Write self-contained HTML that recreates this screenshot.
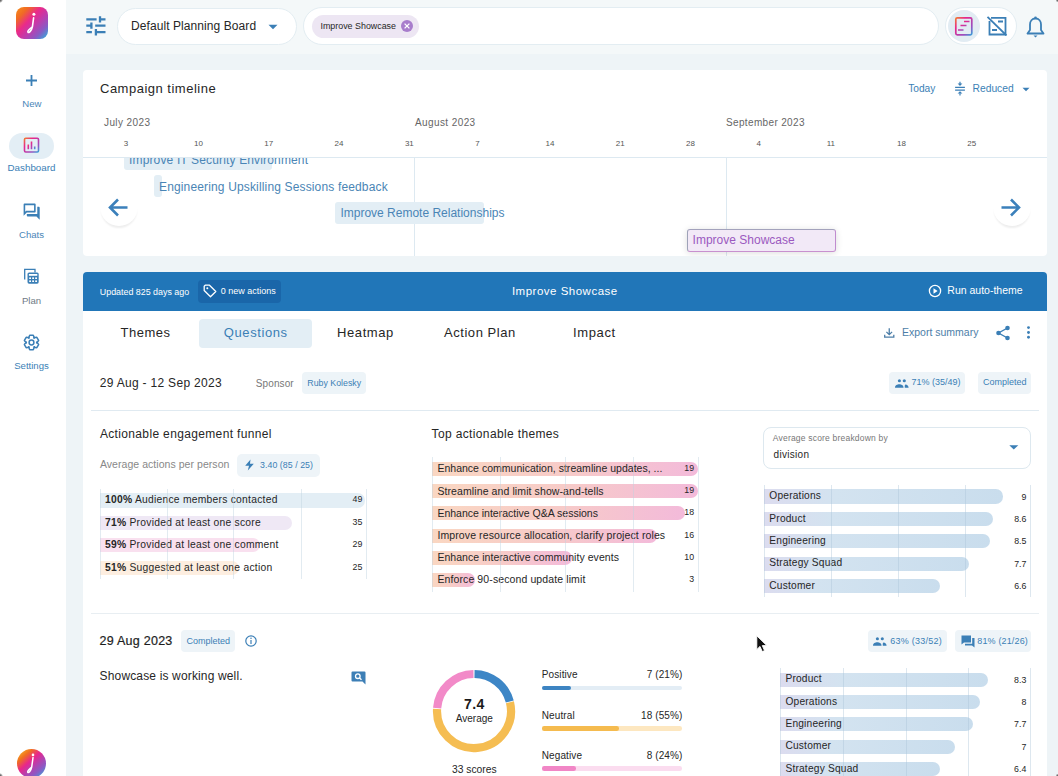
<!DOCTYPE html>
<html><head><meta charset="utf-8">
<style>
*{box-sizing:border-box;margin:0;padding:0}
html,body{width:1058px;height:776px;overflow:hidden;background:#eef4f7;font-family:"Liberation Sans",sans-serif;color:#262626;position:relative}
.abs{position:absolute}
.t{position:absolute;white-space:nowrap;line-height:1}
.pill{position:absolute;background:#fff;border:1px solid #e3edf2}
</style></head><body>
<div class="abs" style="left:0px;top:0px;width:66px;height:776px;background:#fff;border-radius:0;"></div>
<svg class="abs" style="left:16px;top:7px" width="32" height="32" viewBox="0 0 32 32">
<defs><linearGradient id="lg" x1="0.05" y1="0.1" x2="0.95" y2="0.95"><stop offset="0" stop-color="#f5821c"/><stop offset="0.15" stop-color="#f06a25"/><stop offset="0.38" stop-color="#ea2a8a"/><stop offset="0.58" stop-color="#c33aaa"/><stop offset="0.8" stop-color="#8c58c4"/><stop offset="1" stop-color="#3aa3d8"/></linearGradient></defs>
<rect width="32" height="32" rx="8" fill="url(#lg)"/>
<path d="M17.6 10.8L16.4 19.8C14 21.5 11.3 24.3 12 25.3C12.8 26.4 15.6 23.6 16.4 19.8" fill="none" stroke="#fff" stroke-width="1.6" stroke-linecap="round" stroke-linejoin="round"/>
<circle cx="17.9" cy="7.2" r="1.5" fill="#fff"/>
</svg>
<svg class="abs" style="left:25px;top:74px" width="13" height="13" viewBox="0 0 13 13"><path d="M6.5 1V12M1 6.5H12" stroke="#3b7fb6" stroke-width="1.8"/></svg>
<div class="t" style="left:31.90px;transform:translateX(-50%);top:98.57px;font-size:9.6px;color:#4a86b8;">New</div>
<div class="abs" style="left:9px;top:133px;width:45px;height:26px;background:#e3eef5;border-radius:13px;"></div>
<svg class="abs" style="left:23px;top:137px" width="17" height="16" viewBox="0 0 17 16">
<defs><linearGradient id="dg" x1="0" y1="0" x2="1" y2="1"><stop offset="0" stop-color="#f07a30"/><stop offset="0.3" stop-color="#e8258c"/><stop offset="0.75" stop-color="#9a4fc0"/><stop offset="1" stop-color="#3aa0d8"/></linearGradient></defs>
<rect x="1.5" y="1.2" width="14" height="13.8" rx="1.2" fill="none" stroke="url(#dg)" stroke-width="1.6"/>
<path d="M5.3 7.5V12.3M8.5 4.5V12.3M11.7 9.5V12.3" stroke="url(#dg)" stroke-width="1.6"/>
</svg>
<div class="t" style="left:31.50px;transform:translateX(-50%);top:163.30px;font-size:9.8px;color:#3b7fb6;">Dashboard</div>
<svg class="abs" style="left:21.8px;top:201.8px" width="19.3" height="19.3" viewBox="0 0 24 24"><path fill="#3b7fb6" d="M15 4v7H5.17L4 12.17V4h11m1-2H3c-.55 0-1 .45-1 1v14l4-4h10c.55 0 1-.45 1-1V3c0-.55-.45-1-1-1zm5 4h-2v9H6v2c0 .55.45 1 1 1h11l4 4V7c0-.55-.45-1-1-1z"/></svg>
<div class="t" style="left:31.50px;transform:translateX(-50%);top:229.87px;font-size:9.6px;color:#4a86b8;">Chats</div>
<svg class="abs" style="left:23px;top:268px" width="17" height="17" viewBox="0 0 17 17">
<path d="M1.7 11.4V1.3H12V4.4" fill="none" stroke="#3b7fb6" stroke-width="1.3"/>
<rect x="4.5" y="4.4" width="11.2" height="11.3" rx="1.6" fill="#3b7fb6"/>
<rect x="5.9" y="6" width="8.4" height="1.8" fill="#fff"/>
<g fill="#fff"><rect x="6.2" y="9.4" width="1.8" height="1.6"/><rect x="9.2" y="9.4" width="1.8" height="1.6"/><rect x="12.2" y="9.4" width="1.8" height="1.6"/>
<rect x="6.2" y="12.4" width="1.8" height="1.6"/><rect x="9.2" y="12.4" width="1.8" height="1.6"/><rect x="12.2" y="12.4" width="1.8" height="1.6"/></g>
</svg>
<div class="t" style="left:31.50px;transform:translateX(-50%);top:295.87px;font-size:9.6px;color:#6f7a86;">Plan</div>
<svg class="abs" style="left:23px;top:333.5px" width="17" height="17" viewBox="0 0 17 17"><path d="M11.48 4.24 L10.29 1.32 L6.71 1.32 L5.52 4.24 L6.30 3.79 L3.18 3.36 L1.39 6.46 L3.32 8.95 L3.32 8.05 L1.39 10.54 L3.18 13.64 L6.30 13.21 L5.52 12.76 L6.71 15.68 L10.29 15.68 L11.48 12.76 L10.70 13.21 L13.82 13.64 L15.61 10.54 L13.68 8.05 L13.68 8.95 L15.61 6.46 L13.82 3.36 L10.70 3.79Z" fill="none" stroke="#3b7fb6" stroke-width="1.5" stroke-linejoin="round"/><circle cx="8.5" cy="8.5" r="2.4" fill="none" stroke="#3b7fb6" stroke-width="1.5"/></svg>
<div class="t" style="left:31.50px;transform:translateX(-50%);top:360.87px;font-size:9.6px;color:#3b7fb6;">Settings</div>
<svg class="abs" style="left:17px;top:749px" width="29" height="29" viewBox="0 0 29 29">
<defs><linearGradient id="lg2" x1="0.1" y1="0.05" x2="0.9" y2="0.95"><stop offset="0" stop-color="#f7b02a"/><stop offset="0.2" stop-color="#f0701e"/><stop offset="0.42" stop-color="#e8268c"/><stop offset="0.62" stop-color="#b342b0"/><stop offset="0.8" stop-color="#8a5bc5"/><stop offset="1" stop-color="#3aa3d8"/></linearGradient></defs>
<circle cx="14.5" cy="14.5" r="14.5" fill="url(#lg2)"/>
<path d="M16 8.6L14.7 18.2C12.5 19.8 10.1 22.4 10.8 23.3C11.6 24.3 14 21.8 14.7 18.2" fill="none" stroke="#fff" stroke-width="1.5" stroke-linecap="round" stroke-linejoin="round"/>
<circle cx="16" cy="5.9" r="1.3" fill="#fff"/>
</svg>
<div class="abs" style="left:66px;top:0px;width:992px;height:54px;background:#f4f8f9;border-radius:0;"></div>
<svg class="abs" style="left:85px;top:14px" width="22" height="23" viewBox="0 0 22 23">
<g stroke="#3b7fb6" stroke-width="2.3">
<path d="M1.3 5.4H11.6M15 5.4H20.5M15 2.2V8.5"/>
<path d="M1.3 11.7H6.9M10.2 11.7H20.5M6.4 8.6V14.8"/>
<path d="M1.3 18.2H6.9M10.9 18.2H20.5M10.9 15.1V21.6"/>
</g></svg>
<div class="pill" style="left:117px;top:8px;width:180px;height:37px;border-radius:19px"></div>
<div class="t" style="left:131.00px;top:19.84px;font-size:12px;color:#262626;letter-spacing:0.08px;">Default Planning Board</div>
<svg class="abs" style="left:268px;top:24px" width="10" height="6" viewBox="0 0 10 6"><path d="M0.5 0.8H9.5L5 5.2Z" fill="#3b7fb6"/></svg>
<div class="pill" style="left:303px;top:7px;width:636px;height:38px;border-radius:19px"></div>
<div class="abs" style="left:312px;top:15px;width:107px;height:23px;background:#ede6f3;border-radius:12px;"></div>
<div class="t" style="left:320.50px;top:21.67px;font-size:8.9px;color:#262626;">Improve Showcase</div>
<svg class="abs" style="left:401px;top:20px" width="12" height="12" viewBox="0 0 12 12"><circle cx="6" cy="6" r="6" fill="#a87dcc"/><path d="M3.6 3.6L8.4 8.4M8.4 3.6L3.6 8.4" stroke="#fff" stroke-width="1.3"/></svg>
<div class="pill" style="left:945px;top:7px;width:72px;height:38px;border-radius:19px"></div>
<div class="abs" style="left:948px;top:10px;width:32px;height:32px;background:#e2ecf3;border-radius:50%;"></div>
<svg class="abs" style="left:954px;top:16px" width="20" height="20" viewBox="0 0 20 20">
<defs><linearGradient id="ig" x1="0" y1="0" x2="1" y2="1"><stop offset="0" stop-color="#f07a30"/><stop offset="0.3" stop-color="#e8258c"/><stop offset="0.75" stop-color="#9a4fc0"/><stop offset="1" stop-color="#3aa0d8"/></linearGradient></defs>
<rect x="1.8" y="1.8" width="16" height="17" rx="1.5" fill="none" stroke="url(#ig)" stroke-width="1.7"/>
<path d="M10 5.5H15.5M6.5 9.5H12.5M4 14H9.5" stroke="url(#ig)" stroke-width="1.7"/>
</svg>
<svg class="abs" style="left:986px;top:16px" width="22" height="20" viewBox="0 0 22 20">
<g fill="none" stroke="#3b7fb6" stroke-width="1.8">
<path d="M5 1.8H19.5V18.5H3.5V5"/>
<path d="M12 5.5H17M6 14H11"/>
<path d="M1.5 0.8L20.5 19.5"/>
</g></svg>
<svg class="abs" style="left:1026px;top:16px" width="19" height="23" viewBox="0 0 19 23">
<g fill="none" stroke="#3b7fb6" stroke-width="1.8" stroke-linejoin="round">
<path d="M9.5 2.5C6 2.5 4 5.2 4 8.5V14L1.5 17.5H17.5L15 14V8.5C15 5.2 13 2.5 9.5 2.5Z"/>
</g><circle cx="9.5" cy="1.8" r="1.3" fill="#3b7fb6"/><path d="M7.5 19.5H11.5L9.5 21.5Z" fill="#3b7fb6"/></svg>
<div class="abs" style="left:83px;top:70px;width:964px;height:186px;background:#fff;border-radius:4px;"></div>
<div class="t" style="left:100.00px;top:81.80px;font-size:13px;color:#262626;letter-spacing:0.5px;">Campaign timeline</div>
<div class="t" style="left:908.20px;top:83.97px;font-size:10.2px;color:#3b7fb6;">Today</div>
<svg class="abs" style="left:954px;top:81px" width="12" height="15" viewBox="0 0 12 15">
<path d="M1.1 6.3H10.9M1.1 9.2H10.9M6 0.8V3" stroke="#3b7fb6" stroke-width="1.2" fill="none"/><path d="M6 12.2V14.4" stroke="#3b7fb6" stroke-width="1.2"/>
<path d="M3.6 2.5H8.4L6 4.9Z M3.6 12.6H8.4L6 10.2Z" fill="#3b7fb6"/></svg>
<div class="t" style="left:972.50px;top:83.88px;font-size:10.3px;color:#3b7fb6;">Reduced</div>
<svg class="abs" style="left:1022px;top:87px" width="8" height="5" viewBox="0 0 8 5"><path d="M0.5 0.8H7.5L4 4.2Z" fill="#3b7fb6"/></svg>
<div class="t" style="left:104.00px;top:117.73px;font-size:10px;color:#666;letter-spacing:0.4px;">July 2023</div>
<div class="t" style="left:415.00px;top:117.73px;font-size:10px;color:#666;letter-spacing:0.4px;">August 2023</div>
<div class="t" style="left:726.00px;top:117.73px;font-size:10px;color:#666;letter-spacing:0.35px;">September 2023</div>
<div class="t" style="left:123.70px;top:140.03px;font-size:8px;color:#555;">3</div>
<div class="t" style="left:194.00px;top:140.03px;font-size:8px;color:#555;">10</div>
<div class="t" style="left:264.30px;top:140.03px;font-size:8px;color:#555;">17</div>
<div class="t" style="left:334.60px;top:140.03px;font-size:8px;color:#555;">24</div>
<div class="t" style="left:404.90px;top:140.03px;font-size:8px;color:#555;">31</div>
<div class="t" style="left:475.20px;top:140.03px;font-size:8px;color:#555;">7</div>
<div class="t" style="left:545.50px;top:140.03px;font-size:8px;color:#555;">14</div>
<div class="t" style="left:615.80px;top:140.03px;font-size:8px;color:#555;">21</div>
<div class="t" style="left:686.10px;top:140.03px;font-size:8px;color:#555;">28</div>
<div class="t" style="left:756.40px;top:140.03px;font-size:8px;color:#555;">4</div>
<div class="t" style="left:826.70px;top:140.03px;font-size:8px;color:#555;">11</div>
<div class="t" style="left:897.00px;top:140.03px;font-size:8px;color:#555;">18</div>
<div class="t" style="left:967.30px;top:140.03px;font-size:8px;color:#555;">25</div>
<div class="abs" style="left:83px;top:157px;width:964px;height:1px;background:#dde9f1;border-radius:0;"></div>
<div class="abs" style="left:414px;top:158px;width:1px;height:98px;background:#dde9f1;border-radius:0;"></div>
<div class="abs" style="left:726px;top:158px;width:1px;height:98px;background:#dde9f1;border-radius:0;"></div>
<div class="abs" style="left:83px;top:158px;width:964px;height:98px;overflow:hidden">
<div class="abs" style="left:41px;top:-12px;width:148px;height:23.5px;background:#e3eef5;border-radius:3px"></div>
<div class="t" style="left:46px;top:-4.16px;font-size:12px;color:#4a85b5;letter-spacing:0.15px">Improve IT Security Environment</div>
<div class="abs" style="left:71px;top:17px;width:8px;height:22px;background:#e3eef5;border-radius:3px"></div>
<div class="t" style="left:76px;top:22.54px;font-size:12px;color:#4a85b5;letter-spacing:0.15px">Engineering Upskilling Sessions feedback</div>
<div class="abs" style="left:252px;top:44px;width:149px;height:22px;background:#e3eef5;border-radius:3px"></div>
<div class="t" style="left:257.4px;top:49.14px;font-size:12px;color:#4a85b5">Improve Remote Relationships</div>
<div class="abs" style="left:604px;top:71px;width:149px;height:23px;background:#f2e9f7;border:1px solid;border-color:#a3a2bc #c08ccf #c890cf #9ea2b8;border-radius:3px;box-shadow:0 1px 7px rgba(0,0,0,0.14)"></div>
<div class="t" style="left:609.6px;top:75.64px;font-size:12px;color:#9b59c0">Improve Showcase</div>
</div>
<div class="abs" style="left:100px;top:188px;width:38px;height:38px;background:#fff;border-radius:50%;box-shadow:0 3px 2px -1px rgba(0,0,0,0.07)"></div>
<svg class="abs" style="left:108px;top:197px" width="21" height="21" viewBox="0 0 21 21"><path d="M19.5 10.5H2.5M10 2.5L2 10.5L10 18.5" fill="none" stroke="#3b80bb" stroke-width="2.6"/></svg>
<div class="abs" style="left:993px;top:188px;width:38px;height:38px;background:#fff;border-radius:50%;box-shadow:0 3px 2px -1px rgba(0,0,0,0.07)"></div>
<svg class="abs" style="left:1000px;top:197px" width="21" height="21" viewBox="0 0 21 21"><path d="M1.5 10.5H18.5M11 2.5L19 10.5L11 18.5" fill="none" stroke="#3b80bb" stroke-width="2.6"/></svg>
<div class="abs" style="left:83px;top:272px;width:964px;height:39px;background:#2176b8;border-radius:4px 4px 0 0;"></div>
<div class="t" style="left:99.80px;top:287.57px;font-size:8.9px;color:#fff;">Updated 825 days ago</div>
<div class="abs" style="left:198px;top:280px;width:83px;height:23px;background:#1a66a9;border-radius:4px;"></div>
<svg class="abs" style="left:203px;top:284px" width="14" height="14" viewBox="0 0 14 14"><path d="M1.2 2.2V6.5L7.5 12.8L12.8 7.5L6.5 1.2H2.2Z" fill="none" stroke="#fff" stroke-width="1.3" stroke-linejoin="round"/><circle cx="4.3" cy="4.3" r="1" fill="#fff"/></svg>
<div class="t" style="left:220.70px;top:287.38px;font-size:9px;color:#fff;">0 new actions</div>
<div class="t" style="left:511.90px;top:286.07px;font-size:11.5px;color:#fff;letter-spacing:0.5px;">Improve Showcase</div>
<svg class="abs" style="left:928px;top:284px" width="14" height="14" viewBox="0 0 14 14"><circle cx="7" cy="7" r="5.6" fill="none" stroke="#fff" stroke-width="1.3"/><path d="M5.5 4.3V9.7L9.6 7Z" fill="#fff"/></svg>
<div class="t" style="left:947.30px;top:285.41px;font-size:10.5px;color:#fff;">Run auto-theme</div>
<div class="abs" style="left:83px;top:311px;width:964px;height:465px;background:#fff;border-radius:0;"></div>
<div class="abs" style="left:199px;top:319px;width:113px;height:29px;background:#e3eef5;border-radius:4px;"></div>
<div class="t" style="left:120.60px;top:325.90px;font-size:13px;color:#262626;letter-spacing:0.47px;">Themes</div>
<div class="t" style="left:223.80px;top:325.90px;font-size:13px;color:#3b7fb6;letter-spacing:0.59px;">Questions</div>
<div class="t" style="left:337.10px;top:325.90px;font-size:13px;color:#262626;letter-spacing:0.57px;">Heatmap</div>
<div class="t" style="left:444.00px;top:325.90px;font-size:13px;color:#262626;letter-spacing:0.55px;">Action Plan</div>
<div class="t" style="left:573.00px;top:325.90px;font-size:13px;color:#262626;letter-spacing:0.63px;">Impact</div>
<svg class="abs" style="left:884px;top:328px" width="10.5" height="10" viewBox="0 0 10.5 10"><path d="M5.25 0.3V6.6M2.4 3.9L5.25 6.7L8.1 3.9M0.7 6.8V9.2H9.8V6.8" fill="none" stroke="#4d7ea8" stroke-width="1.3"/></svg>
<div class="t" style="left:902.00px;top:327.21px;font-size:10.5px;color:#4d7ea8;">Export summary</div>
<svg class="abs" style="left:995px;top:325px" width="16" height="16" viewBox="0 0 16 16"><g fill="#3b7fb6"><circle cx="12.5" cy="3" r="2.3"/><circle cx="3.5" cy="8" r="2.3"/><circle cx="12.5" cy="13" r="2.3"/></g><path d="M12.5 3L3.5 8L12.5 13" fill="none" stroke="#3b7fb6" stroke-width="1.4"/></svg>
<svg class="abs" style="left:1026px;top:325px" width="5" height="15" viewBox="0 0 5 15"><g fill="#3b7fb6"><circle cx="2.5" cy="2.6" r="1.45"/><circle cx="2.5" cy="7.5" r="1.45"/><circle cx="2.5" cy="12.3" r="1.45"/></g></svg>
<div class="t" style="left:99.80px;top:377.44px;font-size:12px;color:#262626;letter-spacing:0.3px;">29 Aug - 12 Sep 2023</div>
<div class="t" style="left:255.80px;top:378.84px;font-size:10px;color:#777;letter-spacing:0.1px;">Sponsor</div>
<div class="abs" style="left:302px;top:372px;width:64px;height:21.5px;background:#edf4f8;border-radius:4px;"></div>
<div class="t" style="left:307.30px;top:378.55px;font-size:8.8px;color:#3b7fb6;">Ruby Kolesky</div>
<div class="abs" style="left:889px;top:372px;width:76px;height:22px;background:#eef4f8;border-radius:4px;"></div>
<svg class="abs" style="left:894.5px;top:379px" width="14" height="9" viewBox="0 0 14 9"><g fill="#3b7fb6"><circle cx="4.4" cy="1.7" r="1.55"/><circle cx="9.3" cy="1.7" r="1.55"/><path d="M0 8.7C0 6 2.3 5.2 4.25 5.2C6.2 5.2 8.5 6 8.5 8.7Z"/><path d="M9.8 8.7H13.6C13.6 6.6 12.2 5.5 10.5 5.4C9.5 5.9 9.8 7.1 9.8 8.7Z"/></g></svg>
<div class="t" style="left:911.40px;top:377.78px;font-size:9px;color:#3b7fb6;">71% (35/49)</div>
<div class="abs" style="left:978px;top:372px;width:53px;height:22px;background:#eef4f8;border-radius:4px;"></div>
<div class="t" style="left:982.90px;top:377.78px;font-size:9px;color:#3b7fb6;">Completed</div>
<div class="abs" style="left:91px;top:410px;width:948px;height:1px;background:#e0eaf1;border-radius:0;"></div>
<div class="t" style="left:99.90px;top:427.74px;font-size:12px;color:#262626;letter-spacing:0.35px;">Actionable engagement funnel</div>
<div class="t" style="left:99.90px;top:459.31px;font-size:10.5px;color:#888;letter-spacing:0.05px;">Average actions per person</div>
<div class="abs" style="left:237px;top:454px;width:83px;height:23px;background:#eef4f8;border-radius:5px;"></div>
<svg class="abs" style="left:244px;top:459px" width="11" height="12" viewBox="0 0 11 12"><path d="M6.5 0.5L1.2 6.8H5L3.8 11.5L9.8 4.8H6Z" fill="#3b7fb6"/></svg>
<div class="t" style="left:260.00px;top:460.55px;font-size:8.8px;color:#3b7fb6;letter-spacing:0.05px;">3.40 (85 / 25)</div>
<div class="abs" style="left:100px;top:493px;width:265.4px;height:14.5px;background:#e3eef5;border-radius:0 7.25px 7.25px 0;"></div>
<div class="t" style="left:105px;top:495.38px;font-size:10.3px;color:#262626;letter-spacing:0.25px"><b>100%</b> Audience members contacted</div>
<div class="t" style="right:695.70px;top:495.45px;font-size:8.8px;color:#262626;">49</div>
<div class="abs" style="left:100px;top:516px;width:192.10000000000002px;height:14px;background:#efe8f5;border-radius:0 7.0px 7.0px 0;"></div>
<div class="t" style="left:105px;top:517.88px;font-size:10.3px;color:#262626;letter-spacing:0.25px"><b>71%</b> Provided at least one score</div>
<div class="t" style="right:695.70px;top:517.95px;font-size:8.8px;color:#262626;">35</div>
<div class="abs" style="left:100px;top:537.5px;width:160.39999999999998px;height:14.5px;background:#f9e0ef;border-radius:0 7.25px 7.25px 0;"></div>
<div class="t" style="left:105px;top:540.38px;font-size:10.3px;color:#262626;letter-spacing:0.25px"><b>59%</b> Provided at least one comment</div>
<div class="t" style="right:695.70px;top:540.45px;font-size:8.8px;color:#262626;">29</div>
<div class="abs" style="left:100px;top:560.5px;width:138.7px;height:14px;background:#fdeee0;border-radius:0 7.0px 7.0px 0;"></div>
<div class="t" style="left:105px;top:562.88px;font-size:10.3px;color:#262626;letter-spacing:0.25px"><b>51%</b> Suggested at least one action</div>
<div class="t" style="right:695.70px;top:562.95px;font-size:8.8px;color:#262626;">25</div>
<div class="abs" style="left:100px;top:489px;width:1px;height:90px;background:rgba(190,210,225,0.45);border-radius:0;"></div>
<div class="abs" style="left:167px;top:489px;width:1px;height:90px;background:rgba(190,210,225,0.45);border-radius:0;"></div>
<div class="abs" style="left:233px;top:489px;width:1px;height:90px;background:rgba(190,210,225,0.45);border-radius:0;"></div>
<div class="abs" style="left:301px;top:489px;width:1px;height:90px;background:rgba(190,210,225,0.45);border-radius:0;"></div>
<div class="abs" style="left:366px;top:489px;width:1px;height:90px;background:rgba(190,210,225,0.45);border-radius:0;"></div>
<div class="t" style="left:431.60px;top:427.84px;font-size:12px;color:#262626;letter-spacing:0.36px;">Top actionable themes</div>
<div class="abs" style="left:432px;top:461.8px;width:266px;height:14.2px;background:linear-gradient(90deg,#fad7c2 0%,#f7cbc8 50%,#f3bada 100%);border-radius:0 7px 7px 0;"></div>
<div class="t" style="left:437.40px;top:462.91px;font-size:10.5px;color:#262626;letter-spacing:0.02px;">Enhance communication, streamline updates, ...</div>
<div class="t" style="right:363.90px;top:463.55px;font-size:8.8px;color:#262626;">19</div>
<div class="abs" style="left:432px;top:483.5px;width:266px;height:14.2px;background:linear-gradient(90deg,#fad7c2 0%,#f7cbc8 50%,#f3bada 100%);border-radius:0 7px 7px 0;"></div>
<div class="t" style="left:437.40px;top:485.51px;font-size:10.5px;color:#262626;letter-spacing:0.1px;">Streamline and limit show-and-tells</div>
<div class="t" style="right:363.90px;top:486.15px;font-size:8.8px;color:#262626;">19</div>
<div class="abs" style="left:432px;top:506px;width:253px;height:14.2px;background:linear-gradient(90deg,#fad7c2 0%,#f7cbc8 50%,#f3bada 100%);border-radius:0 7px 7px 0;"></div>
<div class="t" style="left:437.40px;top:507.71px;font-size:10.5px;color:#262626;">Enhance interactive Q&amp;A sessions</div>
<div class="t" style="right:363.90px;top:508.35px;font-size:8.8px;color:#262626;">18</div>
<div class="abs" style="left:432px;top:528.5px;width:224.5px;height:14.2px;background:linear-gradient(90deg,#fad7c2 0%,#f7cbc8 50%,#f3bada 100%);border-radius:0 7px 7px 0;"></div>
<div class="t" style="left:437.40px;top:530.21px;font-size:10.5px;color:#262626;letter-spacing:0.11px;">Improve resource allocation, clarify project roles</div>
<div class="t" style="right:363.90px;top:530.85px;font-size:8.8px;color:#262626;">16</div>
<div class="abs" style="left:432px;top:550.5px;width:140.39999999999998px;height:14.2px;background:linear-gradient(90deg,#fad7c2 0%,#f7cbc8 50%,#f3bada 100%);border-radius:0 7px 7px 0;"></div>
<div class="t" style="left:437.40px;top:552.11px;font-size:10.5px;color:#262626;letter-spacing:0.05px;">Enhance interactive community events</div>
<div class="t" style="right:363.90px;top:552.75px;font-size:8.8px;color:#262626;">10</div>
<div class="abs" style="left:432px;top:573px;width:43.30000000000001px;height:14.2px;background:linear-gradient(90deg,#fad7c2 0%,#f7cbc8 50%,#f3bada 100%);border-radius:0 7px 7px 0;"></div>
<div class="t" style="left:437.40px;top:574.11px;font-size:10.5px;color:#262626;letter-spacing:0.11px;">Enforce 90-second update limit</div>
<div class="t" style="right:363.90px;top:574.75px;font-size:8.8px;color:#262626;">3</div>
<div class="abs" style="left:432px;top:457px;width:1px;height:135px;background:rgba(190,210,225,0.45);border-radius:0;"></div>
<div class="abs" style="left:500px;top:457px;width:1px;height:135px;background:rgba(190,210,225,0.45);border-radius:0;"></div>
<div class="abs" style="left:565px;top:457px;width:1px;height:135px;background:rgba(190,210,225,0.45);border-radius:0;"></div>
<div class="abs" style="left:633px;top:457px;width:1px;height:135px;background:rgba(190,210,225,0.45);border-radius:0;"></div>
<div class="abs" style="left:698px;top:457px;width:1px;height:135px;background:rgba(190,210,225,0.45);border-radius:0;"></div>
<div class="abs" style="left:763px;top:427px;width:268px;height:42px;border:1px solid #dde8ef;border-radius:8px;background:#fff"></div>
<div class="t" style="left:772.80px;top:434.40px;font-size:8.5px;color:#777;letter-spacing:0.2px;">Average score breakdown by</div>
<div class="t" style="left:773.60px;top:450.14px;font-size:10px;color:#262626;letter-spacing:0.3px;">division</div>
<svg class="abs" style="left:1009px;top:445px" width="10" height="5" viewBox="0 0 10 5"><path d="M0.3 0.3H9.3L4.8 4.6Z" fill="#3b7fb6"/></svg>
<div class="abs" style="left:764px;top:489px;width:239px;height:14.5px;background:linear-gradient(90deg,#dcdcef 0%,#d3e3f0 30%,#c9dded 100%);border-radius:0 7.25px 7.25px 0;"></div>
<div class="t" style="left:769.30px;top:491.37px;font-size:10.2px;color:#262626;letter-spacing:0.2px;">Operations</div>
<div class="t" style="right:31.60px;top:492.55px;font-size:8.8px;color:#262626;">9</div>
<div class="abs" style="left:764px;top:511.8px;width:229px;height:14px;background:linear-gradient(90deg,#dcdcef 0%,#d3e3f0 30%,#c9dded 100%);border-radius:0 7.0px 7.0px 0;"></div>
<div class="t" style="left:769.30px;top:513.87px;font-size:10.2px;color:#262626;letter-spacing:0.2px;">Product</div>
<div class="t" style="right:31.60px;top:515.05px;font-size:8.8px;color:#262626;">8.6</div>
<div class="abs" style="left:764px;top:533.8px;width:226px;height:14.5px;background:linear-gradient(90deg,#dcdcef 0%,#d3e3f0 30%,#c9dded 100%);border-radius:0 7.25px 7.25px 0;"></div>
<div class="t" style="left:769.30px;top:536.07px;font-size:10.2px;color:#262626;letter-spacing:0.2px;">Engineering</div>
<div class="t" style="right:31.60px;top:537.25px;font-size:8.8px;color:#262626;">8.5</div>
<div class="abs" style="left:764px;top:556.5px;width:204.79999999999995px;height:14.3px;background:linear-gradient(90deg,#dcdcef 0%,#d3e3f0 30%,#c9dded 100%);border-radius:0 7.15px 7.15px 0;"></div>
<div class="t" style="left:769.30px;top:558.37px;font-size:10.2px;color:#262626;letter-spacing:0.2px;">Strategy Squad</div>
<div class="t" style="right:31.60px;top:559.55px;font-size:8.8px;color:#262626;">7.7</div>
<div class="abs" style="left:764px;top:579px;width:176px;height:14.2px;background:linear-gradient(90deg,#dcdcef 0%,#d3e3f0 30%,#c9dded 100%);border-radius:0 7.1px 7.1px 0;"></div>
<div class="t" style="left:769.30px;top:580.77px;font-size:10.2px;color:#262626;letter-spacing:0.2px;">Customer</div>
<div class="t" style="right:31.60px;top:581.95px;font-size:8.8px;color:#262626;">6.6</div>
<div class="abs" style="left:764px;top:485px;width:1px;height:112px;background:rgba(170,195,215,0.4);border-radius:0;"></div>
<div class="abs" style="left:831px;top:485px;width:1px;height:112px;background:rgba(170,195,215,0.4);border-radius:0;"></div>
<div class="abs" style="left:898px;top:485px;width:1px;height:112px;background:rgba(170,195,215,0.4);border-radius:0;"></div>
<div class="abs" style="left:965px;top:485px;width:1px;height:112px;background:rgba(170,195,215,0.4);border-radius:0;"></div>
<div class="abs" style="left:1030px;top:485px;width:1px;height:112px;background:rgba(170,195,215,0.4);border-radius:0;"></div>
<div class="abs" style="left:91px;top:613px;width:948px;height:1px;background:#e8eef2;border-radius:0;"></div>
<div class="t" style="left:99.60px;top:635.02px;font-size:12.5px;color:#1e1e1e;letter-spacing:0.25px;-webkit-text-stroke:0.2px #1e1e1e;">29 Aug 2023</div>
<div class="abs" style="left:181px;top:630px;width:54px;height:22px;background:#eef4f8;border-radius:4px;"></div>
<div class="t" style="left:186.50px;top:636.98px;font-size:9px;color:#3b7fb6;">Completed</div>
<svg class="abs" style="left:245px;top:635px" width="12" height="12" viewBox="0 0 12 12"><circle cx="6" cy="6" r="5.2" fill="none" stroke="#3b7fb6" stroke-width="1.2"/><path d="M6 5V9" stroke="#3b7fb6" stroke-width="1.2"/><circle cx="6" cy="3.3" r="0.75" fill="#3b7fb6"/></svg>
<div class="t" style="left:99.60px;top:670.24px;font-size:12px;color:#262626;letter-spacing:0.15px;">Showcase is working well.</div>
<svg class="abs" style="left:351px;top:671px" width="15" height="14" viewBox="0 0 15 14"><path d="M1.5 0.5H13.5A1 1 0 0 1 14.5 1.5V13.5L11.5 10.5H1.5A1 1 0 0 1 0.5 9.5V1.5A1 1 0 0 1 1.5 0.5Z" fill="#3d7fb6"/><circle cx="6.8" cy="5.2" r="2.3" fill="none" stroke="#fff" stroke-width="1.3"/><path d="M8.5 6.9L10.5 8.8" stroke="#fff" stroke-width="1.4"/></svg>
<svg class="abs" style="left:429.30px;top:665.80px" width="90" height="90" viewBox="-45 -45 90 90"><path d="M0.52 -37.00A37.00 37.00 0 0 1 35.77 -9.45" fill="none" stroke="#3d86c6" stroke-width="8.20"/><path d="M35.96 -8.70A37.00 37.00 0 1 1 -36.94 -2.07" fill="none" stroke="#f5bd52" stroke-width="8.20"/><path d="M-36.89 -2.84A37.00 37.00 0 0 1 -0.52 -37.00" fill="none" stroke="#f28ac8" stroke-width="8.20"/></svg>
<div class="t" style="left:474.30px;transform:translateX(-50%);top:696.75px;font-size:14px;color:#1a1a1a;font-weight:700;letter-spacing:0.3px;">7.4</div>
<div class="t" style="left:474.30px;transform:translateX(-50%);top:713.83px;font-size:10px;color:#262626;">Average</div>
<div class="t" style="left:474.30px;transform:translateX(-50%);top:764.68px;font-size:10.3px;color:#262626;">33 scores</div>
<div class="t" style="left:541.80px;top:669.63px;font-size:10px;color:#262626;letter-spacing:0.1px;">Positive</div>
<div class="t" style="right:375.60px;top:669.63px;font-size:10px;color:#262626;letter-spacing:0.1px;">7 (21%)</div>
<div class="abs" style="left:541.8px;top:686px;width:140.6px;height:3.8px;background:#e3edf5;border-radius:1.9px;"></div>
<div class="abs" style="left:541.8px;top:686px;width:29.200000000000045px;height:3.8px;background:#3d84c2;border-radius:1.9px;"></div>
<div class="t" style="left:541.80px;top:710.53px;font-size:10px;color:#262626;letter-spacing:0.1px;">Neutral</div>
<div class="t" style="right:375.60px;top:710.53px;font-size:10px;color:#262626;letter-spacing:0.1px;">18 (55%)</div>
<div class="abs" style="left:541.8px;top:726.1px;width:140.6px;height:4.7px;background:#fde7c0;border-radius:2.35px;"></div>
<div class="abs" style="left:541.8px;top:726.1px;width:77.20000000000005px;height:4.7px;background:#f5bb4f;border-radius:2.35px;"></div>
<div class="t" style="left:541.80px;top:750.53px;font-size:10px;color:#262626;letter-spacing:0.1px;">Negative</div>
<div class="t" style="right:375.60px;top:750.53px;font-size:10px;color:#262626;letter-spacing:0.1px;">8 (24%)</div>
<div class="abs" style="left:541.8px;top:766.3px;width:140.6px;height:4.6px;background:#fbdcef;border-radius:2.3px;"></div>
<div class="abs" style="left:541.8px;top:766.3px;width:34.0px;height:4.6px;background:#f186c6;border-radius:2.3px;"></div>
<div class="abs" style="left:868px;top:630px;width:79px;height:22px;background:#eef4f8;border-radius:4px;"></div>
<svg class="abs" style="left:873.3px;top:637px" width="14" height="9" viewBox="0 0 14 9"><g fill="#3b7fb6"><circle cx="4.4" cy="1.7" r="1.55"/><circle cx="9.3" cy="1.7" r="1.55"/><path d="M0 8.7C0 6 2.3 5.2 4.25 5.2C6.2 5.2 8.5 6 8.5 8.7Z"/><path d="M9.8 8.7H13.6C13.6 6.6 12.2 5.5 10.5 5.4C9.5 5.9 9.8 7.1 9.8 8.7Z"/></g></svg>
<div class="t" style="left:890.30px;top:636.88px;font-size:9px;color:#3b7fb6;letter-spacing:0.25px;">63% (33/52)</div>
<div class="abs" style="left:955px;top:630px;width:76px;height:22px;background:#eef4f8;border-radius:4px;"></div>
<svg class="abs" style="left:960.7px;top:635px" width="14" height="13" viewBox="0 0 14 13"><path d="M0.5 0.5H10V7.5H3L0.5 9.5Z" fill="#3b7fb6"/><path d="M11.2 3H13.5V12.5L11 10.5H4V8.7H11.2Z" fill="#3b7fb6"/></svg>
<div class="t" style="left:977.30px;top:636.88px;font-size:9px;color:#3b7fb6;letter-spacing:0.15px;">81% (21/26)</div>
<div class="abs" style="left:780px;top:672.7px;width:208.20000000000005px;height:14.1px;background:linear-gradient(90deg,#dcdcef 0%,#d3e3f0 30%,#c9dded 100%);border-radius:0 7.05px 7.05px 0;"></div>
<div class="t" style="left:785.40px;top:674.37px;font-size:10.2px;color:#262626;letter-spacing:0.2px;">Product</div>
<div class="t" style="right:31.70px;top:675.55px;font-size:8.8px;color:#262626;">8.3</div>
<div class="abs" style="left:780px;top:694.7px;width:200.29999999999995px;height:14.1px;background:linear-gradient(90deg,#dcdcef 0%,#d3e3f0 30%,#c9dded 100%);border-radius:0 7.05px 7.05px 0;"></div>
<div class="t" style="left:785.40px;top:696.67px;font-size:10.2px;color:#262626;letter-spacing:0.2px;">Operations</div>
<div class="t" style="right:31.70px;top:697.85px;font-size:8.8px;color:#262626;">8</div>
<div class="abs" style="left:780px;top:716.7px;width:193px;height:14.6px;background:linear-gradient(90deg,#dcdcef 0%,#d3e3f0 30%,#c9dded 100%);border-radius:0 7.3px 7.3px 0;"></div>
<div class="t" style="left:785.40px;top:718.87px;font-size:10.2px;color:#262626;letter-spacing:0.2px;">Engineering</div>
<div class="t" style="right:31.70px;top:720.05px;font-size:8.8px;color:#262626;">7.7</div>
<div class="abs" style="left:780px;top:739.5px;width:175.39999999999998px;height:14.4px;background:linear-gradient(90deg,#dcdcef 0%,#d3e3f0 30%,#c9dded 100%);border-radius:0 7.2px 7.2px 0;"></div>
<div class="t" style="left:785.40px;top:741.37px;font-size:10.2px;color:#262626;letter-spacing:0.2px;">Customer</div>
<div class="t" style="right:31.70px;top:742.55px;font-size:8.8px;color:#262626;">7</div>
<div class="abs" style="left:780px;top:761.5px;width:160.10000000000002px;height:14.4px;background:linear-gradient(90deg,#dcdcef 0%,#d3e3f0 30%,#c9dded 100%);border-radius:0 7.2px 7.2px 0;"></div>
<div class="t" style="left:785.40px;top:763.77px;font-size:10.2px;color:#262626;letter-spacing:0.2px;">Strategy Squad</div>
<div class="t" style="right:31.70px;top:764.95px;font-size:8.8px;color:#262626;">6.4</div>
<div class="abs" style="left:780px;top:668px;width:1px;height:108px;background:rgba(170,195,215,0.4);border-radius:0;"></div>
<div class="abs" style="left:843px;top:668px;width:1px;height:108px;background:rgba(170,195,215,0.4);border-radius:0;"></div>
<div class="abs" style="left:906px;top:668px;width:1px;height:108px;background:rgba(170,195,215,0.4);border-radius:0;"></div>
<div class="abs" style="left:968px;top:668px;width:1px;height:108px;background:rgba(170,195,215,0.4);border-radius:0;"></div>
<div class="abs" style="left:1030px;top:668px;width:1px;height:108px;background:rgba(170,195,215,0.4);border-radius:0;"></div>
<svg class="abs" style="left:756px;top:635px" width="12" height="18" viewBox="0 0 12 18"><path d="M0.8 0.8V14.5L4 11.4L6.3 16.6L8.5 15.6L6.3 10.6H10.8Z" fill="#111" stroke="#fff" stroke-width="0.9"/></svg>
<div class="abs" style="left:0;top:0;width:3px;height:3px;background:radial-gradient(circle at 0 0,#555 0,#777 1.2px,rgba(255,255,255,0) 3px)"></div>
<div class="abs" style="left:1055px;top:0;width:3px;height:3px;background:radial-gradient(circle at 100% 0,#555 0,#777 1px,rgba(255,255,255,0) 2.5px)"></div>
<div class="abs" style="left:0;top:773px;width:3px;height:3px;background:radial-gradient(circle at 0 100%,#555 0,#777 1.2px,rgba(255,255,255,0) 3px)"></div>
<div class="abs" style="left:1055px;top:773px;width:3px;height:3px;background:radial-gradient(circle at 100% 100%,#555 0,#777 1px,rgba(255,255,255,0) 2.5px)"></div>
</body></html>
